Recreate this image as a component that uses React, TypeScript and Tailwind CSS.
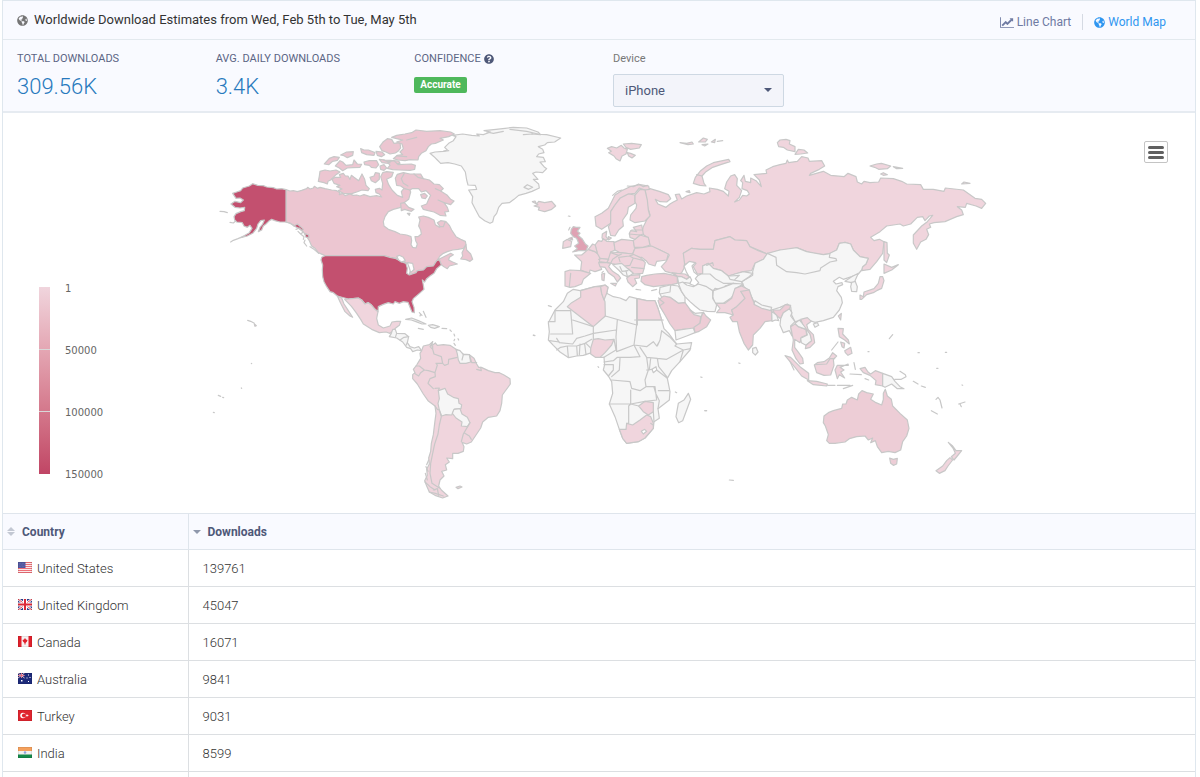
import { ReactNode } from "react";
import { FaGlobeAmericas, FaQuestionCircle } from "react-icons/fa";

const NONE = "#f6f6f6";
const LOW = "#f0d5dd";
const MID = "#edcdd6";
const CANADA = "#ecc6d1";
const UK = "#dfa2b3";
const USA = "#c3506f";

type Shape = [fill: string, d: string];
type Region = { name: string; x: number; y: number; shapes: Shape[] };

const regions: Region[] = [
  {
    name: "north-america",
    x: 0,
    y: 0,
    shapes: [
      [CANADA, "M228 209L240 213 250 212 262 215 275 211 290 206 293 202 300 207 310 204 313 199 322 205 330 202 345 206 365 210 380 212 390 218 388 224 398 220 405 227 420 222 430 226 440 225 450 228 462 224 480 230 500 227 515 231 508 222 498 218 496 208 508 205 516 210 518 190 512 170 518 158 530 155 550 157 545 170 530 178 536 194 546 210 562 226 578 232 574 215 582 205 598 206 602 216 596 238 580 250 572 262 550 268 535 275 525 290 520 305 522 318 535 328 555 335 570 342 590 345 603 350 605 362 603 374 608 382 618 384 622 372 617 362 615 350 624 350 634 342 632 330 626 318 630 300 626 291 640 288 655 292 672 300 676 314 688 322 700 312 708 305 718 316 725 330 738 350 752 358 766 364 768 374 760 385 744 388 728 390 712 395 700 400 690 408 682 420 694 414 712 405 722 400 730 404 718 412 716 420 728 426 742 432 718 438 712 446 702 440 694 434 688 420 680 422 670 438 650 440 640 450 622 452 618 458 598 465 600 455 612 448 606 436 595 428 590 430 580 423 560 415 540 412 522 407 345 407 325 398 315 385 305 378 298 362 290 350 280 336 268 322 255 318 245 312 228 306Z"],
      [CANADA, "M768 374L770 390 782 402 788 418 780 424 768 419 752 417 758 408 756 398Z"],
      [CANADA, "M330 154L345 150 360 153 378 150 390 156 378 164 370 172 362 180 354 184 352 192 342 188 325 184 328 168Z"],
      [CANADA, "M366 178L376 172 392 172 388 164 400 160 406 168 414 168 420 178 424 166 432 172 446 182 456 162 464 178 468 196 478 206 474 212 456 210 440 216 425 221 400 220 385 212 396 207 380 200 390 196 372 190Z"],
      [CANADA, "M480 172L492 168 496 158 508 160 508 178 496 188 484 182Z"],
      [CANADA, "M343 132L358 115 372 110 388 112 382 121 368 124 356 134Z"],
      [CANADA, "M376 138L390 122 398 126 408 136 428 134 432 120 442 132 455 133 450 142 428 143 412 144 398 152 388 144Z"],
      [CANADA, "M392 105L410 96 430 95 428 106 412 113 402 107Z"],
      [CANADA, "M452 86L462 90 475 90 495 98 492 106 470 104 455 98Z"],
      [CANADA, "M462 126L478 122 500 122 506 134 498 144 484 142 478 136 464 134Z"],
      [CANADA, "M498 94L516 96 524 104 514 110 502 106Z"],
      [CANADA, "M508 118L525 120 540 121 566 123 570 130 548 132 516 128Z"],
      [CANADA, "M510 138L522 134 530 144 522 151 512 148Z"],
      [CANADA, "M509 80L520 65 532 56 545 58 552 70 570 68 572 84 564 94 556 99 540 102 528 96 516 92Z"],
      [CANADA, "M545 52L560 46 585 42 605 38 618 30 650 34 690 32 722 36 733 42 716 50 690 55 700 60 676 70 664 72 655 80 648 92 634 100 626 110 624 120 600 119 585 122 564 120 550 116 562 106 578 104 570 96 580 86 576 72 560 66 578 60 560 56Z"],
      [CANADA, "M533 126L552 122 564 134 604 132 616 136 614 148 600 151 568 150 548 149 532 145 540 136Z"],
      [CANADA, "M556 175L562 163 580 158 600 162 632 162 640 176 658 180 672 192 688 194 700 206 692 213 712 226 722 238 732 243 722 254 702 248 712 262 716 274 704 276 708 288 690 286 672 276 655 272 640 268 634 258 650 252 656 238 662 226 648 212 634 216 626 206 606 206 600 210 584 206 572 198 560 196Z"],
      ["none", "M583 160L574 176 580 190 594 198M612 162L624 172 640 176M520 120L540 128M560 108L590 110M590 60L620 52M692 213L676 206M702 248L684 240"],
      [CANADA, "M572 250L583 248 596 262 612 268 604 274 584 268 574 272Z"],
      [CANADA, "M632 224L644 220 652 228 646 236 636 234ZM592 280L600 280 598 286Z"],
      [CANADA, "M682 308L692 302 706 304 700 320 690 320Z"],
      [USA, "M335 412L345 407 522 407 540 412 555 415 572 424 588 430 592 445 590 460 598 465 618 458 622 452 640 450 650 440 670 438 680 422 688 420 694 434 680 446 672 460 660 468 650 476 644 486 637 480 640 495 642 508 625 523 610 536 606 545 612 562 613 578 606 576 600 562 594 547 580 545 568 550 555 545 550 552 535 548 520 553 505 560 504 575 495 568 485 556 475 548 465 552 455 540 445 534 415 537 382 528 370 518 360 515 350 500 342 485 338 470 337 450 338 435 333 420Z"],
      [USA, "M128 191L143 196 160 197 170 201 190 203 200 207 215 206 228 209V306L210 306 195 302 185 298 176 304 168 312 160 318 155 330 145 335 150 322 158 312 163 300 152 302 144 312 140 325 128 340 112 348 92 353 118 338 126 325 120 316 112 322 102 318 97 308 80 306 74 300 72 290 78 281 92 275 103 272 104 262 90 264 75 262 63 252 75 244 92 248 100 240 90 234 78 235 68 220 80 216 92 212 98 204 118 198Z"],
      [USA, "M252 318L262 312 272 320 280 328 276 332 264 324ZM284 340L296 345 297 352 288 352Z"],
      ["none", "M228 306L240 309 252 318M258 328L268 324 280 336 272 342 264 334M272 342L282 350 280 358M285 360L282 368 290 378M300 380L312 388 326 400M30 274L42 275 52 278M62 366L70 361 84 356 100 349M60 307L70 309 76 304M113 601L122 604 133 610"],
      [USA, "M133 612L139 617 135 619Z"],
      ["#fff", "M560 409L568 406 580 412 586 422 574 426 566 420ZM592 428L608 430 612 448 602 458 598 444Z"],
      [LOW, "M404 538L415 537 435 535 445 534 455 540 465 552 475 548 485 556 495 568 504 575 500 595 505 615 520 624 540 618 546 606 560 604 572 604 568 616 556 625 550 632 540 640 528 636 508 638 485 628 460 612 452 598 440 580 425 560Z"],
      [LOW, "M382 528L395 534 402 552 415 572 428 592 420 588 405 575 392 550Z"],
      [NONE, "M660 100L675 96 700 94 712 90 704 82 716 70 730 62 738 50 728 46 758 42 785 46 808 48 800 42 820 44 842 36 822 32 858 28 885 25 910 22 950 24 984 36 992 44 965 42 1010 44 1052 54 1034 66 1012 68 1004 75 985 80 998 88 1002 98 986 102 980 110 1000 112 1006 125 990 126 1002 140 1010 146 998 158 978 156 968 160 984 178 970 178 986 192 988 204 966 214 948 220 926 226 912 238 898 248 876 250 866 262 860 280 852 290 848 306 840 310 824 302 808 290 796 268 786 248 788 230 776 210 800 208 796 196 774 195 770 180 766 156 754 138 734 132 714 128 692 130 682 120 672 110Z"],
      ["none", "M900 28L950 34 984 42M940 44L968 42M830 36L850 40 880 34M700 94L716 92"],
      [NONE, "M942 202L952 194 968 202 956 208Z"],
      [LOW, "M967 245L975 243 980 252 986 244 1004 248 1025 244 1037 258 1025 268 1004 275 985 270 988 262 972 258 984 254Z"],
    ],
  },
  {
    name: "south-america",
    x: 510,
    y: 570,
    shapes: [
      [NONE, "M28 80L34 70 38 58 46 58 50 70 75 71 86 80 82 98 90 110 103 114 116 110 125 122 112 120 98 125 92 116 80 112 68 96 50 84Z"],
      ["none", "M50 70L46 82M60 90L72 82 86 80M78 106L82 98"],
      [NONE, "M77 28L95 24 115 32 138 42 126 42 108 35 94 30ZM145 46L158 44 178 50 164 55 152 52Z"],
      ["none", "M115 55L130 58M186 55L200 56M118 8L126 16M122 12L120 18M130 4L138 22M210 60L214 64M222 72L224 78M224 88L222 92M234 86L236 90M222 100L226 106"],
      [LOW, "M125 122L130 108 148 104 158 95 154 108 166 99 172 106 190 104 210 106 228 118 250 132 268 134 282 145 290 162 296 172 304 172 325 182 345 188 358 188 372 195 390 206 391 222 378 240 367 255 365 280 360 302 350 318 325 322 308 336 302 354 290 372 274 396 260 402 246 397 252 410 250 424 234 430 218 430 218 446 200 444 208 456 196 464 200 480 185 484 192 498 180 510 176 528 184 540 204 558 188 564 165 556 148 546 140 528 134 512 142 496 140 478 148 462 146 444 152 424 154 400 160 374 164 340 168 310 165 288 144 272 130 252 112 222 98 206 98 194 105 188 100 178 110 165 122 145 120 130Z"],
      [NONE, "M228 118L240 122 250 134 268 134 272 156 258 160 240 160 235 150 232 132Z"],
      [NONE, "M175 242L195 235 203 252 220 262 235 266 237 280 245 284 243 296 224 297 215 315 198 314 185 318 178 300 174 280 178 266Z"],
      [NONE, "M222 298L240 296 246 312 262 322 270 338 262 350 244 348 246 336 228 324 217 310Z"],
      ["none", "M178 300L184 320 178 345 174 372 164 402 158 430 152 460 150 490 156 520 178 534M165 288L172 298 178 300M165 235L178 234 175 242M133 180L145 182 165 188 166 200 150 206 144 220 160 236M165 188L172 165 168 160 188 160 184 140 162 132 158 118 158 108M103 190L116 198 122 188 133 180 118 168 108 168M188 160L194 166 205 162 206 148 232 142M250 134L246 150M268 134L275 158 290 158M244 395L250 372 270 338M252 368L268 378 274 388M290 178L304 182 302 172M160 540L172 536 176 556M158 95L150 110 158 118"],
      ["none", "M146 450L140 464M136 490L142 510M138 470L144 484M148 546L166 550 190 558M135 516L150 530 165 540"],
      [LOW, "M228 532L240 528 246 531 234 536Z"],
    ],
  },
  {
    name: "russia-and-central-asia",
    x: 1410,
    y: 0,
    shapes: [
      [LOW, "M-105 208L-90 206 -62 214 -35 224 -28 236 -40 246 -60 245 -74 238 -66 252 -42 262 -30 252 -20 246 -8 240 -14 224 -2 222 5 237 20 228 50 218 72 222 90 215 88 204 112 208 130 214 145 228 147 214 134 206 140 186 152 168 164 164 172 176 170 196 185 212 178 232 164 246 178 240 188 226 200 228 208 222 202 212 186 206 188 188 182 182 192 166 196 184 212 188 212 174 228 182 244 200 238 180 222 164 260 160 258 150 278 140 300 134 318 130 322 120 326 128 352 124 365 110 384 114 388 124 425 122 434 138 418 148 392 160 388 166 430 154 452 166 492 170 504 160 528 170 532 186 545 192 552 184 570 188 596 186 602 174 640 176 665 184 680 192 722 194 730 208 760 208 792 214 796 204 850 210 885 235 905 238 917 250 905 265 888 258 860 250 856 262 832 260 845 270 850 284 830 290 795 305 762 308 748 312 752 322 740 328 746 344 738 358 722 366 710 388 700 370 700 345 725 318 742 305 758 286 748 288 735 302 728 290 712 292 692 312 670 318 660 312 620 318 600 335 572 352 582 362 598 358 612 365 608 400 590 425 570 448 545 452 548 440 558 432 565 415 540 410 520 390 512 372 495 367 478 370 470 390 452 400 430 404 405 402 380 395 350 383 335 390 300 390 262 402 235 390 210 380 200 362 165 360 150 350 105 362 100 388 60 388 35 385 10 400 15 420 12 445 5 458 -12 468 -22 460 -44 454 -56 440 -42 425 -32 405 -60 390 -90 378 -95 355 -115 340 -110 320 -100 300 -90 285 -97 262 -102 230Z"],
      [LOW, "M40 190L46 172 62 152 80 138 100 128 146 118 150 125 122 134 98 142 78 155 66 168 72 190 78 198 60 196Z"],
      ["none", "M50 164L66 168"],
      [LOW, "M292 68L300 60 318 58 330 62 328 72 345 80 345 95 322 90 310 82 296 80ZM345 103L355 88 372 90 383 99 362 102ZM570 138L590 132 604 130 632 138 622 146 596 148 584 142ZM640 140L668 145 650 146ZM845 192L852 186 870 190ZM602 162L610 158 622 164 610 166Z"],
      [LOW, "M612 365L621 368 622 400 628 405 620 428 612 420ZM0 68L20 70 36 66 40 72 24 74ZM56 66L70 54 82 58 76 66ZM66 74L84 72 74 78ZM94 66L106 58 104 68ZM112 64L128 62M18 215L28 212 30 218Z"],
      [LOW, "M10 400L35 385 60 388 100 388 105 362 150 350 165 360 200 362 210 380 235 392 262 402 250 418 225 430 215 452 190 455 165 462 145 468 125 452 100 445 85 430 68 438 70 460 52 462 40 440 48 430 28 426 14 434Z"],
      [NONE, "M262 400L250 418 225 430 218 455 218 466 185 485 192 500 208 515 220 542 250 560 275 570 300 562 322 552 332 560 335 585 345 605 360 602 385 600 405 607 430 602 460 592 478 570 487 548 484 532 470 512 474 500 488 494 486 488 468 492 460 484 478 472 490 478 515 470 535 462 545 450 548 440 558 432 565 415 540 410 520 390 512 372 495 367 478 370 470 390 445 402 430 404 380 395 350 383 300 390Z"],
      ["none", "M262 400L288 412 290 436 320 455 350 458 375 462 420 452 422 444 450 426 470 422 468 416 448 412 450 400"],
      [NONE, "M495 484L515 470 535 460 525 482 532 500 530 515 515 514 512 500 515 488Z"],
      ["none", "M512 488L526 484"],
      [LOW, "M540 525L550 530 552 516 582 506 595 490 600 470 608 470 612 482 605 505 590 512 580 518 560 524 545 538 540 538ZM612 432L635 442 655 434 635 450 612 460Z"],
      [NONE, "M68 438L85 430 100 445 125 452 145 468 165 462 190 455 218 460 205 472 185 485 188 500 160 490 135 498 130 510 105 505 100 512 75 500 50 492 45 470 68 460Z"],
      ["none", "M68 462L90 462 108 478 130 490 160 490M145 468L150 478 185 485M80 436L98 428 100 436M150 468L178 466 165 478"],
      [NONE, "M100 512L135 500 160 490 190 492 168 505 165 520 152 535 130 550 105 550 98 530Z"],
      ["#fff", "M12 438L28 424 46 428 36 438 42 456 54 466 46 476 56 488 46 498 30 492 32 478 20 458Z"],
    ],
  },
  {
    name: "europe",
    x: 990,
    y: 0,
    shapes: [
      [LOW, "M202 85L215 80 230 84 244 76 252 84 262 88 258 102 246 108 240 123 228 116 222 108 206 98 214 94ZM250 72L275 70 304 74 298 84 272 88 258 82ZM262 98L272 100 286 106 276 114 266 108Z"],
      [LOW, "M165 290L185 280 205 265 215 245 225 225 245 212 270 200 300 194 326 198 328 208 315 210 298 204 285 220 265 222 240 235 225 255 212 275 212 310 200 318 185 328 168 318Z"],
      ["none", "M218 226L232 214 246 210M262 198L280 200 296 192 310 200 322 196"],
      [LOW, "M212 275L225 255 240 235 265 222 285 225 285 250 265 262 262 280 248 300 250 318 236 330 225 348 212 346 205 320 212 310Z"],
      [LOW, "M285 225L300 208 315 210 322 240 325 270 330 288 315 303 285 308 270 300 272 285 288 265 290 255 285 245Z"],
      [LOW, "M187 342L200 334 198 350 205 358 192 362 186 354ZM205 350L214 354 206 360Z"],
      [UK, "M94 328L100 320 108 322 120 322 112 334 120 340 114 346 126 356 136 372 144 378 138 392 116 392 98 396 112 386 104 378 116 370 110 355 100 350 92 340Z"],
      ["none", "M86 330L90 322M85 288L90 289"],
      [UK, "M86 356L96 352 98 360Z"],
      [LOW, "M70 365L82 358 95 364 92 380 68 385Z"],
      [LOW, "M104 405L125 405 145 388 165 395 182 408 178 430 185 448 165 455 150 450 148 460 122 450 125 425Z"],
      [LOW, "M75 455L90 450 122 452 152 460 130 478 125 492 105 500 90 502 75 498Z"],
      ["none", "M92 460L88 500M186 458L190 454M200 420L176 418"],
      [LOW, "M165 375L175 362 185 364 190 356 200 364 222 365 225 390 212 396 218 410 205 418 180 415 172 400Z"],
      [LOW, "M145 388L158 372 166 376 172 400 165 395Z"],
      [LOW, "M222 368L245 358 280 362 285 385 278 402 240 398 225 390Z"],
      [LOW, "M280 362L300 345 325 352 330 375 310 382 283 382Z"],
      [LOW, "M280 322L305 315 310 342 300 345 285 358 270 352 268 340 272 332 290 335Z"],
      ["none", "M268 342L300 345M275 330L308 330"],
      [LOW, "M278 402L285 385 310 382 335 378 360 390 385 402 380 420 350 424 345 438 326 432 320 424 305 412 285 414Z"],
      [LOW, "M212 396L240 398 278 402 300 412 316 428 312 446 308 460 280 462 268 448 240 440 222 432 200 428 178 425 180 415 205 418Z"],
      ["none", "M212 398L236 406 245 402M236 406L218 418 212 430M236 412L268 408 280 404M268 408L280 414 270 436 240 440M280 414L312 422M275 442L312 446M200 428L206 418M240 425L236 412"],
      [LOW, "M176 428L200 428 212 430 206 440 218 454 236 466 242 474 232 486 222 470 205 458 195 442 180 440Z"],
      [LOW, "M212 490L230 490 226 498ZM185 462L194 460 192 482 186 480Z"],
      [NONE, "M218 434L245 430 262 445 280 460 272 466 262 470 250 465 236 450Z"],
      ["none", "M240 440L246 454 264 452M258 452L262 470"],
      [LOW, "M260 474L272 466 300 464 298 474 284 476 290 490 278 500 264 486ZM288 508L302 510"],
      [MID, "M305 470L320 466 345 462 372 460 402 466 412 470 412 490 395 494 370 496 340 500 315 494 303 484Z"],
      [LOW, "M396 458L412 460 435 462 448 470 440 478 425 470 412 468Z"],
      [NONE, "M412 470L425 470 440 478 450 470 455 480 450 490 436 488 416 490Z"],
      ["none", "M335 512L350 508"],
    ],
  },
  {
    name: "africa-and-middle-east",
    x: 960,
    y: 450,
    shapes: [
      [NONE, "M130 58L150 62 195 50 225 45 234 52 230 70 250 80 270 84 288 92 298 80 322 86 350 92 375 92 385 118 395 150 402 176 416 190 432 212 440 222 485 218 480 240 450 275 425 302 412 325 420 365 418 390 384 416 388 445 372 455 370 475 345 504 325 515 290 520 278 505 268 478 255 440 238 402 248 370 245 335 235 318 220 300 224 284 222 262 200 262 185 248 160 256 140 258 116 263 90 246 70 226 55 210 58 185 55 158 75 120 100 95 112 70Z"],
      [LOW, "M152 62L195 50 212 50 215 70 225 95 226 138 190 170 112 110 125 98 152 82Z"],
      [LOW, "M212 50L225 45 234 52 230 70 222 90 215 70Z"],
      [LOW, "M322 86L350 92 375 92 385 118 395 150 322 150Z"],
      [LOW, "M190 208L205 206 225 210 252 208 245 225 225 248 210 262 196 262 182 252 182 235Z"],
      [LOW, "M268 478L288 478 290 460 308 465 330 450 350 435 362 440 370 460 370 475 345 504 325 515 290 520 278 505Z"],
      [LOW, "M326 408L345 394 370 398 370 425 355 435 340 425Z"],
      ["#fff", "M334 484L344 478 350 484 340 492Z"],
      ["#fff", "M366 298L378 290 380 300 370 308Z"],
      ["none", "M55 155H75V122H112M88 122L122 122 128 192 62 192M128 150L190 170 190 190 165 198 140 205 128 222 88 218 80 205M226 138L320 165V86M320 165L312 225 260 245 258 200 262 150M190 170L190 208M190 190L258 180M322 150L322 165M314 150L400 150M312 225L330 260 300 262 262 262 250 272 222 276M312 225L350 230 370 215 380 228 388 215M330 232L350 262 382 265 410 268 460 240 482 236M382 265L386 290 412 322M350 262L355 300 345 330 348 350 330 362 305 355 300 335 245 330M270 265L268 300 245 320M222 284H250V300L235 318M350 300L366 298M380 300L412 325M385 362L418 362M348 350L375 350 380 390 345 394M302 360V402L238 402M302 402L296 408V460L290 460M302 402L326 408M372 352L378 372 388 392 384 416M370 425L372 455M112 228L115 262M140 228L142 256M150 222L148 254M164 222L168 254M180 232L168 220M80 240L92 232 112 228 140 228 165 220 185 208M58 212L88 216M395 182L390 210 382 228M395 182L418 200 440 222 435 228 460 240M450 275L460 240M252 208L258 240 222 262M362 460L368 464M362 265L358 300M345 394L302 402"],
      [NONE, "M475 370L482 388 470 420 458 452 446 458 438 440 445 400 462 390Z"],
      ["none", "M55 107L64 110M10 196L15 197M204 290L206 292M436 366L440 368M512 321L516 322M526 422L530 422M626 279L630 280"],
      [NONE, "M390 52L420 45 445 48 455 65 465 80 465 98 445 100 420 82 395 82 388 68Z"],
      ["none", "M390 72L420 66 422 46"],
      [NONE, "M445 40L458 36 470 45 490 50 505 42 530 50 548 62 548 85 560 105 555 125 532 124 510 120 495 108 480 95 465 80 455 65Z"],
      [MID, "M395 82L402 78 420 82 445 100 465 98 480 118 492 130 512 138 510 160 490 176 460 178 435 182 420 162 405 135 390 110 384 92Z"],
      ["none", "M386 84L392 90 402 98 388 108"],
      [NONE, "M435 182L460 178 490 174 495 188 470 198 438 210Z"],
      [NONE, "M480 120L495 130 518 128 514 140 492 134Z"],
      [MID, "M492 172L510 160 514 140 520 126 528 138 542 150 530 170 505 185 495 188Z"],
    ],
  },
  {
    name: "south-asia-and-oceania",
    x: 1470,
    y: 420,
    shapes: [
      [LOW, "M48 130L75 130 95 115 105 85 125 78 148 90 130 105 135 115 110 140 95 150 100 165 75 158 50 158 60 145Z"],
      [MID, "M122 94L148 90 155 112 165 135 215 152 215 182 195 185 180 205 160 225 158 255 145 270 132 250 118 215 112 185 98 185 90 172 100 165 95 150 110 140 135 115Z"],
      [NONE, "M165 122L185 135 215 142 212 152 185 145 162 133Z"],
      [MID, "M218 150L240 150 256 134 272 136 268 148 250 158 242 176 226 164Z"],
      [NONE, "M215 154L230 166 236 182 226 180 216 184Z"],
      [NONE, "M242 176L250 158 268 146 276 158 272 168 285 185 272 198 276 228 268 212 250 218 240 195Z"],
      [LOW, "M272 200L285 192 295 200 318 208 320 225 304 232 300 248 284 238 284 262 296 278 308 295 310 310 300 312 288 296 276 270 280 240Z"],
      [NONE, "M285 190L298 180 312 195 332 225 335 242 318 256 304 248 302 235 322 225 318 208 295 200Z"],
      [LOW, "M302 178L322 173 334 184 320 194 324 208 340 224 344 248 330 262 316 266 318 256 335 242 330 222 308 192Z"],
      [NONE, "M340 192L352 188 356 196 345 202ZM158 265L168 262 174 276 166 285 158 278Z"],
      [LOW, "M415 168L424 160 422 180ZM414 205L430 206 428 222 445 240 448 252 434 240 418 230ZM422 246L434 250 432 264 426 260ZM434 272L452 262 456 280 444 286 436 278Z"],
      ["none", "M395 270L414 246M268 300L282 330M462 308L466 328M450 342L484 344M495 356L506 360"],
      [LOW, "M255 287L272 292 300 320 326 340 326 360 305 348 285 322ZM322 362L350 364 382 372 380 378 340 374ZM384 376L405 376M412 376L450 376M430 386L458 376"],
      [LOW, "M343 315L352 308 372 305 388 294 398 278 410 288 400 298 402 316 392 345 372 346 350 338Z"],
      ["none", "M345 314L380 312 390 296 404 296"],
      [LOW, "M405 330L412 316 445 316 444 312 420 322 432 330 422 336 434 354 418 344 412 356Z"],
      [LOW, "M480 326L495 322 504 336 512 342 526 332 548 340 548 378 526 374 528 362 510 346 490 338Z"],
      [NONE, "M548 340L575 350 585 364 600 380 612 386 592 386 575 372 555 382 548 378Z"],
      ["none", "M584 358L604 358 618 350 616 344 600 334M640 364L654 372M664 378L676 382M708 418L714 412 720 420 726 444M694 452L712 462M776 432L795 426M780 432L784 440M568 236L578 224M504 275L507 275M654 278L658 278M736 277L740 277M710 325L714 325M786 375L788 376M88 660L100 661M14 452L19 452"],
      [MID, "M372 468L385 458 400 452 425 445 428 432 438 432 442 420 455 412 472 420 476 402 486 392 500 398 520 402 512 418 528 428 545 435 550 418 550 400 556 388 562 408 574 418 578 438 600 460 622 480 627 505 620 528 608 545 602 570 585 578 565 574 545 578 532 560 526 542 512 548 518 534 505 540 495 528 470 530 448 536 435 546 405 550 388 550 380 542 385 524 376 498 370 488Z"],
      [MID, "M569 594L580 598 592 595 590 612 580 616 572 610Z"],
      [LOW, "M745 547L758 558 768 572 785 572 772 588 762 600 754 590 766 580 760 566Z"],
      [LOW, "M750 593L758 600 744 618 735 632 718 640 708 632 728 618 740 602Z"],
    ],
  },
];

// tiny Pacific islands
const specks = "M94 804L95 805M124 730L125 731M25 826L32 829M38 832L41 833M10 877L13 878M970 645L973 646";

function WorldMap() {
  return (
    <svg
      viewBox="0 0 2340 1152"
      className="block h-auto w-full"
      role="img"
      aria-label="Downloads by country"
      stroke="#c8c8c8"
      strokeWidth={3.6}
      strokeLinejoin="round"
      strokeLinecap="round"
    >
      {regions.map((region) => (
        <g key={region.name} transform={`translate(${region.x} ${region.y})`}>
          {region.shapes.map(([fill, d], i) => (
            <path key={i} fill={fill} d={d} />
          ))}
        </g>
      ))}
      <path d={specks} fill="none" />
    </svg>
  );
}

function LineChartIcon() {
  return (
    <svg viewBox="0 0 2048 1536" className="h-[11px] w-[14px]" fill="currentColor" aria-hidden="true">
      <path d="M2048 1408v128h-2048v-1536h128v1408h1920zM1920 160v435q0 21-19.500 29.500t-35.500-7.500l-121-121-633 633q-10 10-23 10t-23-10l-233-233-416 416-192-192 585-585q10-10 23-10t23 10l233 233 464-464-121-121q-16-16-7.500-35.500t29.500-19.500h435q14 0 23 9t9 23z" />
    </svg>
  );
}

function Flag({ children }: { children: ReactNode }) {
  return (
    <svg viewBox="0 0 28 22" className="mb-0.5 h-[11px] w-[14px] shrink-0" aria-hidden="true">
      {children}
      <rect x="0.5" y="0.5" width="27" height="21" fill="none" stroke="#000" strokeOpacity="0.15" />
    </svg>
  );
}

const rows = [
  {
    country: "United States",
    downloads: 139761,
    flag: (
      <Flag>
        <path fill="#fbe9ea" d="M0 0h28v22H0z" />
        <path stroke="#ee6f77" strokeWidth="2" d="M0 1h28M0 5h28M0 9h28M0 13h28M0 17h28M0 21h28" />
        <path fill="#5257a0" d="M0 0h15v12H0z" />
        <path stroke="#8286bd" strokeWidth="1" strokeDasharray="1 2" d="M2 3h12M3 6h11M2 9h12" />
      </Flag>
    ),
  },
  {
    country: "United Kingdom",
    downloads: 45047,
    flag: (
      <Flag>
        <path fill="#2e3f92" d="M0 0h28v22H0z" />
        <path stroke="#fff" strokeWidth="5" d="M0 0l28 22M28 0L0 22" />
        <path stroke="#dc3545" strokeWidth="2" d="M0 0l28 22M28 0L0 22" />
        <path stroke="#fff" strokeWidth="8" d="M14 0v22M0 11h28" />
        <path stroke="#dc2839" strokeWidth="4" d="M14 0v22M0 11h28" />
      </Flag>
    ),
  },
  {
    country: "Canada",
    downloads: 16071,
    flag: (
      <Flag>
        <path fill="#f7f3f3" d="M0 0h28v22H0z" />
        <path fill="#e0202b" d="M0 0h7v22H0zM21 0h7v22h-7zM14 4l2 3 3 1-1 3-3 3v3h-2v-3l-3-3-1-3 3-1z" />
      </Flag>
    ),
  },
  {
    country: "Australia",
    downloads: 9841,
    flag: (
      <Flag>
        <path fill="#1d2a7a" d="M0 0h28v22H0z" />
        <path stroke="#e9c4d0" strokeWidth="2" d="M0 0l13 10M13 0L0 10M7 0v10M0 5h13" />
        <path stroke="#d83a52" strokeWidth="1" d="M7 0v10M0 5h13" />
        <path fill="#fff" d="M6 14h3v3H6zM20 3h2v2h-2zM17 9h2v2h-2zM23 8h2v2h-2zM20 16h2v2h-2z" />
      </Flag>
    ),
  },
  {
    country: "Turkey",
    downloads: 9031,
    flag: (
      <Flag>
        <path fill="#e0242e" d="M0 0h28v22H0z" />
        <circle cx="10" cy="11" r="5.500" fill="#fff" />
        <circle cx="12" cy="11" r="4.200" fill="#e0242e" />
        <path fill="#fff" d="M18 8l1 2 3 1-3 1-1 2-1-2-2-1 2-1z" />
      </Flag>
    ),
  },
  {
    country: "India",
    downloads: 8599,
    flag: (
      <Flag>
        <path fill="#f2f2f0" d="M0 0h28v22H0z" />
        <path fill="#f5a05c" d="M0 0h28v8H0z" />
        <path fill="#168a4b" d="M0 15h28v7H0z" />
        <circle cx="14" cy="11" r="2.500" fill="#8fa3dd" />
      </Flag>
    ),
  },
];

const ticks = ["1", "50000", "100000", "150000"];

function Legend() {
  return (
    <div className="flex items-start gap-[15px]">
      <div className="flex h-[187px] w-[11px] flex-col justify-evenly bg-linear-to-b from-[#f0d5dd] to-[#c04565]">
        <div className="h-px bg-[#d8d8d8]" />
        <div className="h-px bg-[#d8d8d8]" />
      </div>
      <div className="-mt-1 flex h-[198px] flex-col justify-between font-['DejaVu_Sans',sans-serif] text-[10px] leading-3 text-[#666]">
        {ticks.map((tick) => (
          <span key={tick}>{tick}</span>
        ))}
      </div>
    </div>
  );
}

function Stat({ label, children }: { label: ReactNode; children: ReactNode }) {
  return (
    <div className="px-3.5">
      <div className="flex items-center gap-[3px] text-[11px] leading-4 whitespace-nowrap text-[#5b6584]">{label}</div>
      {children}
    </div>
  );
}

export default function App() {
  return (
    <div className="h-screen overflow-hidden bg-white pr-1 pl-0.5 font-['Roboto',sans-serif]">
      <div className="border-x border-t border-[#dfe7ee]">
        {/* Title bar */}
        <header className="flex h-[39px] items-center justify-between border-b border-[#e3e9ee] bg-[#f9faff] pr-[29px] pl-3.5">
          <h1 className="flex items-center gap-1.5 text-[13px] leading-5 text-[#333]">
            <FaGlobeAmericas className="size-[11px] text-[#757575]" />
            Worldwide Download Estimates from Wed, Feb 5th to Tue, May 5th
          </h1>
          <nav className="flex items-center pt-1 text-[12px] leading-4">
            <a href="#line-chart" className="flex items-center gap-[3px] border-r border-[#d5dae3] pr-[11px] text-[#6f7ba3]">
              <LineChartIcon />
              Line Chart
            </a>
            <a href="#world-map" className="flex items-center gap-[3px] pl-[11px] text-[#2f96f0]">
              <FaGlobeAmericas className="size-[11px]" />
              World Map
            </a>
          </nav>
        </header>

        {/* Stats */}
        <section className="grid h-[73px] grid-cols-6 border-b-2 border-[#e6ebf1] bg-[#f9faff] pt-[11px]">
          <Stat label="TOTAL DOWNLOADS">
            <div className="mt-2 text-[22px] leading-6 font-light text-[#2779bd]">309.56K</div>
          </Stat>
          <Stat label="AVG. DAILY DOWNLOADS">
            <div className="mt-2 text-[22px] leading-6 font-light text-[#2779bd]">3.4K</div>
          </Stat>
          <Stat
            label={
              <>
                CONFIDENCE <FaQuestionCircle className="size-[10px] text-[#4e5878]" />
              </>
            }
          >
            <span className="mt-2.5 inline-block rounded-xs bg-[#4fb85c] px-1.5 text-[10px] leading-4 font-bold text-white">
              Accurate
            </span>
          </Stat>
          <Stat label={<label htmlFor="device" className="text-[#777]">Device</label>}>
            <div className="relative mt-[7px]">
              <select
                id="device"
                className="h-[33px] w-full appearance-none rounded-xs border border-[#ced8e3] bg-[#f3f4fa] px-[11px] text-[13px] text-[#4e5878]"
              >
                <option>iPhone</option>
              </select>
              <span className="pointer-events-none absolute top-3.5 right-3 border-x-4 border-t-4 border-x-transparent border-t-[#4e5878]" />
            </div>
          </Stat>
        </section>

        {/* Map */}
        <section className="flex items-start pt-[7px] pb-[9px]">
          <div className="w-[207px] shrink-0 pt-[167px] pl-9">
            <Legend />
          </div>
          <div className="min-w-0 flex-1">
            <WorldMap />
          </div>
          <div className="flex w-[205px] shrink-0 justify-end pt-[21px] pr-[27px]">
            <button
              type="button"
              aria-label="Chart menu"
              className="flex h-[22px] w-6 flex-col items-center justify-center gap-0.5 rounded-xs border border-[#c4c4c4] bg-white"
            >
              <span className="h-[3px] w-4 rounded-full bg-[#606060]" />
              <span className="h-[3px] w-4 rounded-full bg-[#606060]" />
              <span className="h-[3px] w-4 rounded-full bg-[#606060]" />
            </button>
          </div>
        </section>

        {/* Country table */}
        <table className="w-full table-fixed border-collapse text-left">
          <thead className="bg-[#f9faff] text-[12px] text-[#4e5878]">
            <tr className="h-9 border-y border-[#dfe5ec]">
              <th scope="col" className="w-[185px] border-r border-[#dfe5ec] pl-1 font-bold">
                <span className="flex items-center gap-[7px]">
                  <span className="flex flex-col gap-px">
                    <span className="border-x-4 border-b-4 border-x-transparent border-b-[#c3c8d3]" />
                    <span className="border-x-4 border-t-4 border-x-transparent border-t-[#c3c8d3]" />
                  </span>
                  Country
                </span>
              </th>
              <th scope="col" className="pl-1 font-bold">
                <span className="flex items-center gap-[7px]">
                  <span className="border-x-4 border-t-4 border-x-transparent border-t-[#8f98ac]" />
                  Downloads
                </span>
              </th>
            </tr>
          </thead>
          <tbody className="text-[13px] font-light text-[#333]">
            {rows.map((row) => (
              <tr key={row.country} className="h-[37px] border-b border-[#dcdfe2]">
                <td className="border-r border-[#dcdfe2] pt-px pl-[15px]">
                  <span className="flex items-center gap-[5px]">
                    {row.flag}
                    {row.country}
                  </span>
                </td>
                <td className="pt-px pl-3.5">{row.downloads}</td>
              </tr>
            ))}
            <tr className="h-[37px]">
              <td className="border-r border-[#dcdfe2]" />
              <td />
            </tr>
          </tbody>
        </table>
      </div>
    </div>
  );
}
